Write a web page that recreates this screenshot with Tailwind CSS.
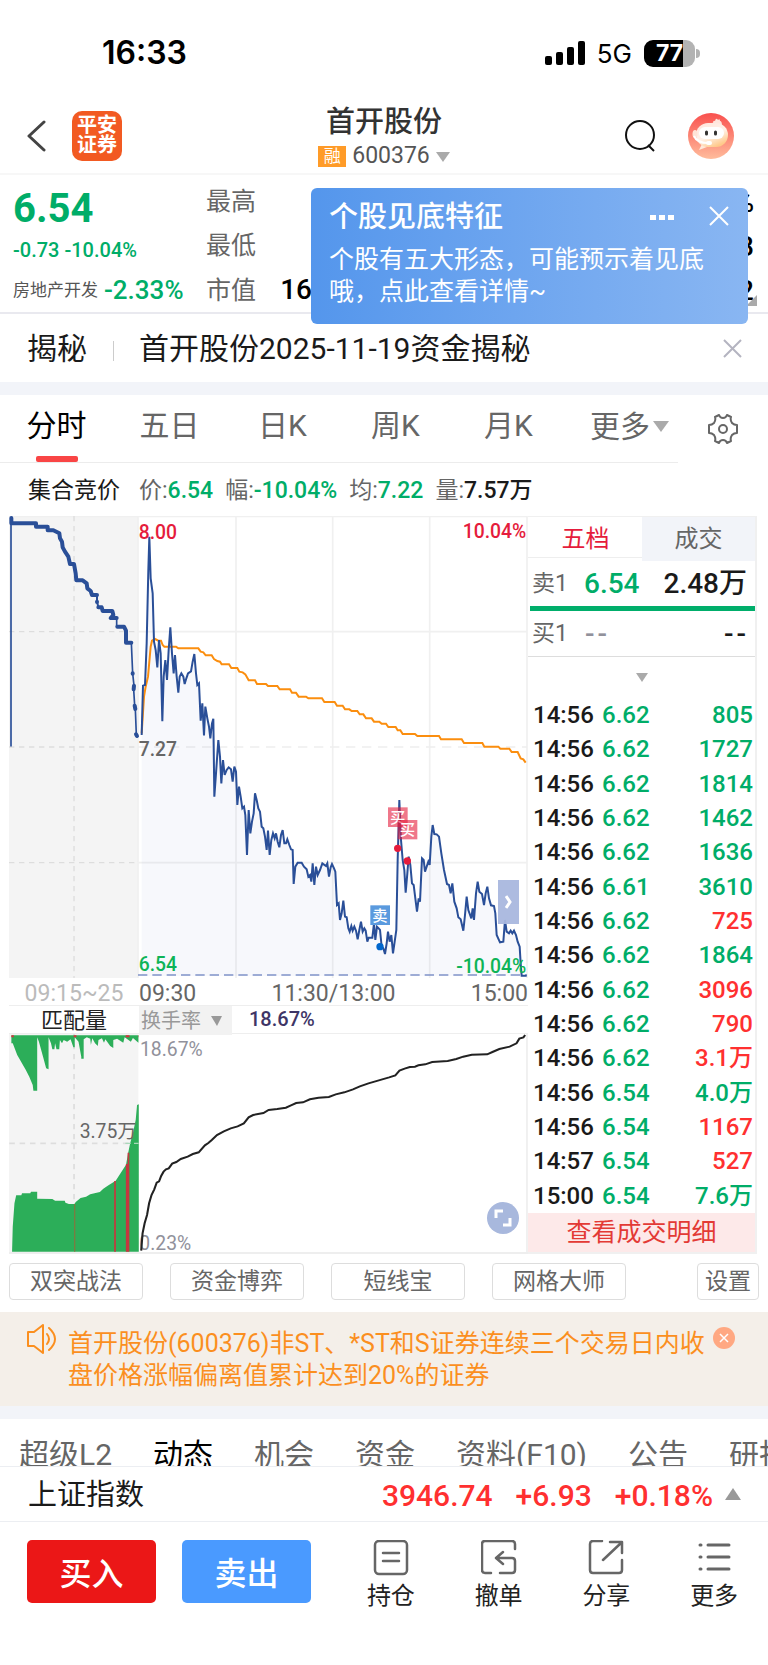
<!DOCTYPE html>
<html lang="zh-CN">
<head>
    <meta charset="UTF-8">
    <meta name="viewport" content="width=device-width, initial-scale=1.0">
    <title>首开股份 600376</title>
    <script src="https://cdn.jsdelivr.net/npm/@tailwindcss/browser@4"></script>
</head>
<body class="bg-white text-[#1a1a1a] font-['Roboto','Noto_Sans_CJK_SC',sans-serif] overflow-x-hidden">
    <!-- Status bar -->
    <div class="flex items-center justify-between h-[78px] pt-[28px] pl-[102px] pr-[68px] text-black font-['Inter',sans-serif]">
        <span class="text-[32px] font-semibold">16:33</span>
        <div class="flex items-center gap-3">
            <svg class="w-[40px] h-[25px]" viewBox="0 0 40 25">
                <rect x="0" y="15" width="7" height="9" rx="2"/>
                <rect x="11" y="11" width="7" height="13" rx="2"/>
                <rect x="22" y="6" width="7" height="18" rx="2"/>
                <rect x="33" y="0" width="7" height="24" rx="2"/>
            </svg>
            <span class="text-[26px]">5G</span>
            <div class="flex items-center gap-px">
                <div class="flex items-center justify-center w-[51px] h-[27px] rounded-[9px] bg-linear-to-r from-black from-76% to-[#b3b3b3] to-76% text-white text-[23px] font-bold">77</div>
                <div class="w-[4px] h-[9px] rounded-r-full bg-[#b3b3b3]"></div>
            </div>
        </div>
    </div>

    <!-- Header -->
    <header class="grid grid-cols-[1fr_auto_1fr] items-center h-[97px] pt-[20px] px-[27px] border-b-2 border-[#f7f7f7]">
        <div class="flex items-center gap-[26px]">
            <button aria-label="返回">
                <svg class="w-[19px] h-[32px]" viewBox="0 0 19 32" fill="none" stroke="#444" stroke-width="3" stroke-linecap="round" stroke-linejoin="round"><path d="M17 2 2 16l15 14"/></svg>
            </button>
            <div class="w-[50px] h-[50px] pt-[4px] rounded-[10px] bg-[#f25a22] text-white text-[20px] leading-[20px] font-bold text-center">平安<br>证券</div>
        </div>
        <div class="flex flex-col items-center pt-[4px]">
            <h1 class="text-[29px] leading-[38px] font-medium text-[#333]">首开股份</h1>
            <button class="flex items-center gap-[6px] h-[32px]">
                <span class="w-[28px] h-[21px] bg-[#ff9b28] text-white text-[17px] leading-[20px] text-center">融</span>
                <span class="text-[23px] text-[#555]">600376</span>
                <svg class="w-[14px] h-[10px]" viewBox="0 0 14 10"><path d="M0 0h14L7 10z" fill="#aaa"/></svg>
            </button>
        </div>
        <div class="flex items-center justify-end gap-[32px] mr-[7px]">
            <button aria-label="搜索">
                <svg class="w-[31px] h-[33px]" viewBox="0 0 31 33" fill="none" stroke="#111" stroke-width="2"><circle cx="15" cy="16" r="14"/><path d="M23 26l6 6"/></svg>
            </button>
            <button aria-label="客服">
                <svg class="w-[46px] h-[46px]" viewBox="0 0 46 46">
                    <defs>
                        <linearGradient id="avatar" x2="0" y2="1"><stop offset="0" stop-color="#f9504e"/><stop offset="1" stop-color="#ffbc9c"/></linearGradient>
                        <linearGradient id="face" x2=".6" y2="1"><stop offset="0" stop-color="#ffe4dc"/><stop offset=".6" stop-color="#fff2e8"/><stop offset="1" stop-color="#ffc98a"/></linearGradient>
                    </defs>
                    <circle cx="23" cy="23" r="23" fill="url(#avatar)"/>
                    <path d="M23 12q0-3 2-2 0-3 2-2 1-4 3-1 2-2 2 1 2 0 2 5z" fill="#ffe6dd"/>
                    <path d="M14 31 11 37l8-3z" fill="#ffe9da"/>
                    <rect x="8" y="10" width="32" height="24" rx="12" fill="url(#face)"/>
                    <rect x="11" y="14" width="25" height="12" rx="6" fill="#fff"/>
                    <ellipse cx="7" cy="21" rx="2.500" ry="4" fill="#ffe3d6"/>
                    <path d="M6 23q3 7 14 7" fill="none" stroke="#fff" stroke-width="2"/>
                    <rect x="18" y="28" width="6" height="4" rx="2" fill="#fff"/>
                    <path d="M18.500 19v2M27.500 19v2" stroke="#333" stroke-width="3" stroke-linecap="round"/>
                </svg>
            </button>
        </div>
    </header>

    <!-- Quote -->
    <section class="relative grid grid-cols-[193px_1fr_auto] h-[139px] pl-[13px] pr-[14px] border-b-2 border-[#e9e9ef]">
        <div class="pt-[10px]">
            <p class="text-[40px] leading-[48px] font-bold text-[#00ad68]">6.54</p>
            <p class="mt-[5px] text-[20px] leading-[24px] font-medium text-[#00ad68]">-0.73 -10.04%</p>
            <p class="flex items-center gap-[6px] mt-[12px] whitespace-nowrap text-[17px] leading-[32px] text-[#555]">房地产开发 <span class="text-[26px] font-medium text-[#00ad68]">-2.33%</span></p>
        </div>
        <div class="pt-[5px] text-[25px] leading-[44px] text-[#666]">
            <p>最高</p>
            <p>最低</p>
            <p>市值 <span class="ml-[18px] text-[28px] font-medium text-black">16</span></p>
        </div>
        <div class="pt-[6px] text-right text-[28px] leading-[44px] font-medium text-black">
            <p>%</p>
            <p>.28</p>
            <p>.22</p>
        </div>
        <svg class="absolute right-[11px] bottom-[6px] w-[11px] h-[11px]" viewBox="0 0 11 11"><path d="M11 0v11H0z" fill="#aaa"/></svg>

        <!-- Hint popup -->
        <div class="absolute z-10 left-[311px] right-[20px] top-[13px] h-[136px] px-[18px] pt-[10px] rounded-[6px] bg-linear-to-r from-[#5496ec] to-[#89b6f2] text-white">
            <div class="flex items-center">
                <h2 class="flex-1 text-[29px] leading-[38px] font-medium">个股见底特征</h2>
                <button aria-label="更多选项" class="flex gap-[3px] mr-[35px]">
                    <i class="w-[6px] h-[5px] bg-white"></i><i class="w-[6px] h-[5px] bg-white"></i><i class="w-[6px] h-[5px] bg-white"></i>
                </button>
                <button aria-label="关闭提示" class="pb-[3px] pr-px">
                    <svg class="w-[20px] h-[20px]" viewBox="0 0 20 20" stroke="#fff" stroke-width="2"><path d="M1 1l18 18M19 1 1 19"/></svg>
                </button>
            </div>
            <p class="mt-[8px] text-[25px] leading-[32px]">个股有五大形态，可能预示着见底哦，点此查看详情~</p>
        </div>
    </section>

    <!-- News -->
    <section class="flex items-center h-[68px] pt-px pl-[27px] pr-[26px] text-[30px]">
        <span>揭秘</span>
        <i class="w-px h-[20px] mt-[4px] ml-[26px] mr-[25px] bg-[#ccc]"></i>
        <a href="#" class="flex-1">首开股份2025-11-19资金揭秘</a>
        <button aria-label="关闭">
            <svg class="w-[19px] h-[19px]" viewBox="0 0 19 19" stroke="#b4b4c0" stroke-width="2"><path d="M1 1l17 17M18 1 1 18"/></svg>
        </button>
    </section>
    <div class="h-[13px] bg-[#f2f4f9]"></div>

    <!-- Period tabs -->
    <nav class="grid grid-cols-[678fr_90fr] h-[67px] text-[30px] leading-[60px] text-[#666]">
        <div class="grid grid-cols-6 border-b border-[#ececec]">
            <button class="flex flex-col items-center pt-px text-black">
                <span>分时</span>
                <i class="w-[42px] h-[6px] rounded-[2px] bg-[#f94545]"></i>
            </button>
            <button class="flex justify-center pt-px">五日</button>
            <button class="flex justify-center pt-px">日K</button>
            <button class="flex justify-center pt-px">周K</button>
            <button class="flex justify-center pt-px">月K</button>
            <button class="flex justify-center items-center gap-[3px] h-[62px] pt-px pl-[16px]">更多
                <svg class="w-[16px] h-[11px]" viewBox="0 0 16 11"><path d="M0 0h16L8 11z" fill="#aaa"/></svg>
            </button>
        </div>
        <button aria-label="图表设置" class="flex justify-center items-center">
            <svg class="w-[30px] h-[30px]" viewBox="0 0 30 30" fill="none" stroke="#666" stroke-width="2" stroke-linejoin="round">
                <path d="M11 1q1 3 4 3t4-3l4 2q-1 3 1 6 2 2 5 2v8q-3 0-5 2-2 3-1 6l-4 2q-1-3-4-3t-4 3l-4-2q1-3-1-6-2-2-5-2v-8q3 0 5-2 2-3 1-6z"/>
                <circle cx="15" cy="15" r="4"/>
            </svg>
        </button>
    </nav>

    <!-- Auction summary -->
    <div class="flex items-center h-[54px] pt-[4px] pl-[28px] text-[23px] text-[#666]">
        <span class="mr-[19px] text-[#1a1a1a]">集合竞价</span>
        <span class="mr-[12px]">价:<b class="font-medium text-[#00ad68]">6.54</b></span>
        <span class="mr-[12px]">幅:<b class="font-medium text-[#00ad68]">-10.04%</b></span>
        <span class="mr-[12px]">均:<b class="font-medium text-[#00ad68]">7.22</b></span>
        <span>量:<b class="font-medium text-[#1a1a1a]">7.57万</b></span>
    </div>

    <!-- Charts and order book -->
    <main class="grid grid-cols-[519fr_229fr] pl-[9px] pr-[11px]">
        <div class="relative border-b-2 border-[#eee]">
            <svg class="w-full block" viewBox="-363 18 1557 1386" font-family="Roboto" font-size="58" font-weight="500">
                <rect x="-363" y="18" width="388" height="1386" fill="#f4f4f4"/>
                <path d="M24 18V1404M318 18V1404M608 18V1404M899 18V1404M1191 18V1404M-363 19H1191M24 365H1191M24 1058H1191" stroke="#f0f0f0" stroke-width="5"/>
                <path d="M-168 18V1404M-363 365H24M-363 711H24M-363 1058H24" stroke="#ddd" stroke-width="4" stroke-dasharray="16 14"/>
                <path d="M24 711H1191" stroke="#eee" stroke-width="5" stroke-dasharray="28 20"/>
                <path d="M35 1398V675L39 527 45 525 50 400 55 180 58 80 62 205 68 250 72 395 77 420 82 472 87 390 92 430 97 634 101 500 106 450 111 510 116 420 121 352 126 430 131 490 135 435 140 500 145 548 149 500 154 490 160 500 164 522 169 505 174 490 183 484 188 455 193 432 198 490 202 525 207 520 212 632 217 580 222 676 226 590 232 625 237 650 241 685 246 640 250 626 253 860 258 790 265 690 270 740 274 820 279 750 284 795 290 780 296 772 303 778 308 815 313 770 318 785 322 885 327 830 332 860 337 895 342 890 346 915 351 1035 356 900 361 970 366 935 371 910 375 850 380 870 385 895 390 905 395 950 400 955 405 980 410 1020 414 962 419 1035 424 990 429 970 434 985 438 970 443 995 448 1012 453 975 458 960 463 1000 468 1000 472 988 478 1005 483 1018 488 1020 491 1122 496 1070 503 1058 515 1058 522 1070 530 1078 535 1100 540 1095 544 1115 548 1060 553 1125 558 1070 563 1095 570 1080 577 1060 588 1068 592 1060 597 1100 602 1072 606 1062 612 1075 616 1085 621 1185 626 1180 630 1230 635 1210 640 1172 645 1220 650 1222 655 1255 659 1265 664 1248 668 1262 673 1250 678 1262 683 1288 688 1260 693 1235 698 1265 703 1255 707 1262 712 1295 716 1283 727 1283 732 1240 736 1290 741 1250 746 1255 750 1260 755 1310 760 1315 765 1332 770 1300 774 1265 779 1295 784 1275 789 1330 794 1295 799 1260 803 1050 808 870 813 990 818 1050 823 1080 827 1148 832 1090 836 1040 841 1065 846 1120 851 1125 856 1165 861 1205 866 1165 870 1175 876 1045 881 1050 885 1085 890 1070 895 1055 899 1065 904 980 908 945 913 972 920 973 927 980 934 1030 942 1080 951 1122 957 1125 962 1150 967 1120 973 1175 980 1195 985 1222 992 1228 1000 1262 1005 1215 1010 1160 1015 1200 1024 1225 1028 1195 1032 1230 1038 1150 1043 1115 1048 1145 1056 1152 1062 1185 1067 1150 1072 1130 1077 1165 1083 1186 1092 1188 1096 1210 1100 1275 1110 1297 1120 1295 1125 1230 1130 1265 1137 1270 1142 1262 1147 1270 1152 1262 1158 1275 1163 1295 1169 1310 1172 1360 1175 1397H1190" fill="#2c56a8" fill-opacity=".04"/>
                <path d="M24 1395H1191" stroke="#8093c8" stroke-width="5" stroke-dasharray="28 15"/>
                <path d="M35 670 42 560 47 530 54 500 62 410 66 392 75 387 85 392H93L98 405 103 410H138L145 415H205L212 425 220 427 227 436H245L252 447 262 453 270 455 275 463H297L304 474H322L328 485 338 487 346 493 356 511H375L381 522H408L414 528H442L449 538H480L486 548H498L506 560H528L535 565H576L583 576H614L621 587H638L645 598H658L665 603H682L689 613H700L708 625H725L732 635H748L755 641H768L775 651H797L803 661H811L818 672H855L862 678H927L933 688H995L1002 699H1057L1063 710H1105L1111 716H1138L1145 726H1163L1172 745 1180 748 1187 758" fill="none" stroke="#fb8e0f" stroke-width="6"/>
                <path d="M35 675 39 527 45 525 50 400 55 180 58 80 62 205 68 250 72 395 77 420 82 472 87 390 92 430 97 634 101 500 106 450 111 510 116 420 121 352 126 430 131 490 135 435 140 500 145 548 149 500 154 490 160 500 164 522 169 505 174 490 183 484 188 455 193 432 198 490 202 525 207 520 212 632 217 580 222 676 226 590 232 625 237 650 241 685 246 640 250 626 253 860 258 790 265 690 270 740 274 820 279 750 284 795 290 780 296 772 303 778 308 815 313 770 318 785 322 885 327 830 332 860 337 895 342 890 346 915 351 1035 356 900 361 970 366 935 371 910 375 850 380 870 385 895 390 905 395 950 400 955 405 980 410 1020 414 962 419 1035 424 990 429 970 434 985 438 970 443 995 448 1012 453 975 458 960 463 1000 468 1000 472 988 478 1005 483 1018 488 1020 491 1122 496 1070 503 1058 515 1058 522 1070 530 1078 535 1100 540 1095 544 1115 548 1060 553 1125 558 1070 563 1095 570 1080 577 1060 588 1068 592 1060 597 1100 602 1072 606 1062 612 1075 616 1085 621 1185 626 1180 630 1230 635 1210 640 1172 645 1220 650 1222 655 1255 659 1265 664 1248 668 1262 673 1250 678 1262 683 1288 688 1260 693 1235 698 1265 703 1255 707 1262 712 1295 716 1283 727 1283 732 1240 736 1290 741 1250 746 1255 750 1260 755 1310 760 1315 765 1332 770 1300 774 1265 779 1295 784 1275 789 1330 794 1295 799 1260 803 1050 808 870 813 990 818 1050 823 1080 827 1148 832 1090 836 1040 841 1065 846 1120 851 1125 856 1165 861 1205 866 1165 870 1175 876 1045 881 1050 885 1085 890 1070 895 1055 899 1065 904 980 908 945 913 972 920 973 927 980 934 1030 942 1080 951 1122 957 1125 962 1150 967 1120 973 1175 980 1195 985 1222 992 1228 1000 1262 1005 1215 1010 1160 1015 1200 1024 1225 1028 1195 1032 1230 1038 1150 1043 1115 1048 1145 1056 1152 1062 1185 1067 1150 1072 1130 1077 1165 1083 1186 1092 1188 1096 1210 1100 1275 1110 1297 1120 1295 1125 1230 1130 1265 1137 1270 1142 1262 1147 1270 1152 1262 1158 1275 1163 1295 1169 1310 1172 1360 1175 1397H1190" fill="none" stroke="#2a4f98" stroke-width="6"/>
                <!-- Call auction -->
                <g transform="translate(-390 0)" fill="none" stroke="#2a4f98" stroke-linecap="round">
                    <path d="M33 40V708" stroke-width="5"/>
                    <path d="M34 24V40H108V50H143V61H160L178 70 180 85 186 95 188 112 195 125 205 140 210 162H222L227 190 229 211H248L260 220 262 235 272 243 276 255H291" stroke-width="12" stroke-linejoin="round"/>
                    <path d="M291 255V275L295 291" stroke-width="6"/>
                    <path d="M295 292H305L308 303H337L340 315 332 324H350M352 350H372L378 362V398H394M291 275V276M398 490V491M402 527 401 538M404 587 406 597M408 673 411 678" stroke-width="12" stroke-linejoin="round"/>
                    <path d="M350 324V350M394 398 398 490 402 527 401 538 404 587 406 597 409 675" stroke-width="5"/>
                </g>
                <g fill="#e51c3c">
                    <text x="26" y="88">8.00</text>
                    <text x="1189" y="83" text-anchor="end">10.04%</text>
                    <circle cx="803" cy="1015" r="11"/>
                    <circle cx="832" cy="1053" r="11"/>
                </g>
                <text x="26" y="737" fill="#666">7.27</text>
                <g fill="#0eb457">
                    <text x="26" y="1382">6.54</text>
                    <text x="1189" y="1389" text-anchor="end">-10.04%</text>
                </g>
                <circle cx="750" cy="1310" r="11" fill="#0066cc"/>
                <g font-family="Noto Sans CJK SC" font-size="46" fill="#fff" text-anchor="middle">
                    <rect x="774" y="892" width="59" height="59" fill="#e51c3c" fill-opacity=".6"/>
                    <text x="803" y="938">买</text>
                    <rect x="803" y="930" width="59" height="58" fill="#e51c3c" fill-opacity=".6"/>
                    <text x="832" y="976">买</text>
                    <rect x="721" y="1186" width="59" height="59" fill="#5a9ade"/>
                    <text x="750" y="1232">卖</text>
                </g>
            </svg>
            <button aria-label="展开盘口" class="absolute right-[9px] top-[364px] flex items-center justify-center w-[21px] h-[44px] bg-[#a9b7de]/95">
                <svg class="w-[7px] h-[14px]" viewBox="0 0 7 14" fill="none" stroke="#fff" stroke-width="3"><path d="M1 1l4 6-4 6"/></svg>
            </button>
            <div class="grid grid-cols-[130fr_389fr] h-[27px] pt-[2px] text-[23px] leading-[28px] text-[#666]">
                <span class="text-center text-[#bbb]">09:15~25</span>
                <div class="flex justify-between"><span>09:30</span><span>11:30/13:00</span><span>15:00</span></div>
            </div>
            <div class="grid grid-cols-[130fr_389fr] h-[29px] border-y border-[#eee]">
                <span class="text-[22px] leading-[29px] text-center text-[#222]">匹配量</span>
                <div class="flex">
                    <label class="flex items-center w-[93px] bg-[#f2f2f2]">
                        <select aria-label="指标" class="appearance-none pl-[2px] text-[20px] leading-[26px] text-[#999]"><option>换手率</option></select>
                        <svg class="w-[11px] h-[10px] ml-[10px]" viewBox="0 0 11 10"><path d="M0 0h11L6 10z" fill="#999"/></svg>
                    </label>
                    <span class="ml-[17px] text-[20px] leading-[26px] font-medium text-[#3e3566]">18.67%</span>
                </div>
            </div>
            <svg class="w-full block" viewBox="27 222 1557 654" font-family="Roboto" font-size="58">
                <rect x="27" y="222" width="388" height="654" fill="#f4f4f4"/>
                <path d="M1581 222V876" stroke="#eee" stroke-width="5"/>
                <g transform="scale(1.0331 1)">
                    <path d="M215 222V876M27 550H403" stroke="#ddd" stroke-width="5" stroke-dasharray="16 14"/>
                    <path d="M33 226V250H37L50 285 75 330 85 350 95 375 97 392H108V232L113 245 125 290 134 325 141 328V232L148 250 152 268H158L160 250 164 268H172L174 240 180 250 185 240 195 245 205 238 213 262H217V232L228 245 236 290V296H243V238L252 232 262 236 264 255 268 235 276 250 284 258 286 240 296 235 302 248 306 238 320 258 329 264V240L340 236 358 248 362 232 380 245 386 234 402 248V226z" fill="#2cae59"/>
                    <path d="M35 875 37 800 42 730 47 706H62L64 700H88L90 695H108V716L152 717 160 722H188L190 728 200 732H216L220 726 234 714 250 710 262 703 290 696 300 686 315 676 336 662 350 640 366 614 372 580 378 550 386 520 394 480 398 435 403 433V875z" fill="#2cae59"/>
                    <path d="M33 229H40M214 229H222M365 229H376M402 229H403" stroke="#d9303e" stroke-width="6"/>
                    <path d="M334 663V875M368 612V875M373 578V875" stroke="#c5383f" stroke-width="5"/>
                    <path d="M217 732V875" stroke="#8f6f3c" stroke-width="3"/>
                </g>
                <path d="M376 550H416" stroke="#a9d8b9" stroke-width="4" stroke-dasharray="16 10"/>
                <text x="239" y="535" fill="#666" font-family="Roboto, Noto Sans CJK SC">3.75万</text>
                <text x="420" y="289" fill="#91919b">18.67%</text>
                <text x="418" y="870" fill="#91919b">0.23%</text>
                <path transform="scale(1.0331 1)" d="M410 872 414 820 420 790 427 765 433 730 440 705 448 688 455 668 462 664 468 648 475 635 482 628 490 625 500 611 512 606 525 597 545 590 560 582 577 577 595 556 605 549 615 540 630 525 650 514 670 505 690 499 708 490 722 472 735 465 765 459 780 450 805 447 830 443 845 436 860 429 880 427 900 418 925 413 955 411 975 403 1000 397 1025 388 1045 379 1070 370 1100 361 1130 352 1148 346 1160 332 1175 326 1190 321 1205 320 1215 316 1235 313 1255 306 1300 303 1325 297 1345 290 1370 284 1415 283 1430 276 1450 267 1480 260 1500 250 1508 236 1520 232 1525 225" fill="none" stroke="#222" stroke-width="6"/>
            </svg>
            <button aria-label="全屏" class="absolute right-[9px] bottom-[18px] flex items-center justify-center w-[32px] h-[32px] rounded-full bg-[#a8b8dd]">
                <svg class="w-[18px] h-[18px]" viewBox="0 0 18 18" fill="none" stroke="#fff" stroke-width="3"><path d="M2 9V2h7M16 9v7H9"/></svg>
            </button>
        </div>

        <div class="flex flex-col border-t border-r-2 border-b-2 border-[#f0f0f0]">
            <div class="grid grid-cols-2 h-[41px] pl-px text-[24px] leading-[44px] text-[#666] border-b border-[#eee]">
                <button class="text-[#e51c3c]">五档</button>
                <button class="bg-[#f2f4f9]">成交</button>
            </div>
            <div class="flex items-center h-[48px] pt-[4px] pl-[4px] pr-[8px] text-[28px] font-medium">
                <span class="w-[52px] text-[23px] font-normal text-[#666]">卖1</span>
                <span class="flex-1 text-[#00ad68]">6.54</span>
                <span>2.48万</span>
            </div>
            <div class="h-[5px] ml-[2px] bg-[#00ae6b]"></div>
            <div class="flex items-center h-[46px] pt-px pl-[4px] pr-[9px] text-[28px] font-medium border-b border-[#ddd]">
                <span class="w-[53px] text-[23px] font-normal text-[#666]">买1</span>
                <span class="flex flex-1 gap-[3px] text-[#91919b]"><i class="not-italic">-</i><i class="not-italic">-</i></span>
                <span class="flex gap-[3px]"><i class="not-italic">-</i><i class="not-italic">-</i></span>
            </div>
            <button aria-label="展开五档" class="flex items-center justify-center h-[41px]">
                <svg class="w-[12px] h-[9px]" viewBox="0 0 12 9"><path d="M0 0h12L6 9z" fill="#aaa"/></svg>
            </button>
            <table class="w-full flex-1 text-[24px] leading-[34px] font-medium text-[#00ad68] [&_td:first-child]:w-[74px] [&_td:first-child]:pl-[5px] [&_td:first-child]:text-[#1a1a1a] [&_td:last-child]:pr-[2px] [&_td:last-child]:text-right [&_td]:p-0 [&_td]:h-[34px]">
                <tbody>
                    <tr><td>14:56</td><td>6.62</td><td>805</td></tr>
                    <tr><td>14:56</td><td>6.62</td><td>1727</td></tr>
                    <tr><td>14:56</td><td>6.62</td><td>1814</td></tr>
                    <tr><td>14:56</td><td>6.62</td><td>1462</td></tr>
                    <tr><td>14:56</td><td>6.62</td><td>1636</td></tr>
                    <tr><td>14:56</td><td>6.61</td><td>3610</td></tr>
                    <tr><td>14:56</td><td>6.62</td><td class="text-[#ff3030]">725</td></tr>
                    <tr><td>14:56</td><td>6.62</td><td>1864</td></tr>
                    <tr><td>14:56</td><td>6.62</td><td class="text-[#ff3030]">3096</td></tr>
                    <tr><td>14:56</td><td>6.62</td><td class="text-[#ff3030]">790</td></tr>
                    <tr><td>14:56</td><td>6.62</td><td class="text-[#ff3030]">3.1万</td></tr>
                    <tr><td>14:56</td><td>6.54</td><td>4.0万</td></tr>
                    <tr><td>14:56</td><td>6.54</td><td class="text-[#ff3030]">1167</td></tr>
                    <tr><td>14:57</td><td>6.54</td><td class="text-[#ff3030]">527</td></tr>
                    <tr><td>15:00</td><td>6.54</td><td>7.6万</td></tr>
                </tbody>
            </table>
            <a href="#" class="h-[39px] text-[25px] leading-[40px] text-center text-[#e33a35] bg-[#fde9e9]">查看成交明细</a>
        </div>
    </main>

    <!-- Tools -->
    <div class="flex gap-[27px] pt-[9px] pb-[12px] pl-[9px] pr-[9px] text-[23px] leading-[36px] text-[#666]">
        <button class="w-[134px] h-[37px] border border-[#ddd] rounded-[4px]">双突战法</button>
        <button class="w-[134px] h-[37px] border border-[#ddd] rounded-[4px]">资金博弈</button>
        <button class="w-[134px] h-[37px] border border-[#ddd] rounded-[4px]">短线宝</button>
        <button class="w-[134px] h-[37px] border border-[#ddd] rounded-[4px]">网格大师</button>
        <button class="w-[62px] h-[37px] ml-auto border border-[#ddd] rounded-[4px]">设置</button>
    </div>

    <!-- Notice -->
    <section class="flex items-start h-[94px] pt-[12px] pl-[27px] pr-[33px] bg-[#f4efe9] text-[#fb8f1f]">
        <svg class="w-[30px] h-[30px]" viewBox="0 0 30 30" fill="none" stroke="#fb8f1f" stroke-width="2" stroke-linejoin="round" stroke-linecap="round"><path d="M1 8h6l9-7v28l-9-7H1zM20 10q4 5 0 10M22 4q12 11 0 22"/></svg>
        <p class="flex-1 pt-[4px] ml-[11px] mr-[4px] text-[25px] leading-[32px]">首开股份(600376)非ST、*ST和S证券连续三个交易日内收盘价格涨幅偏离值累计达到20%的证券</p>
        <button aria-label="关闭公告" class="mt-[3px]">
            <svg class="w-[22px] h-[22px]" viewBox="0 0 22 22"><circle cx="11" cy="11" r="11" fill="#ffa882"/><path d="M7 7l8 8M15 7l-8 8" stroke="#fff" stroke-width="1.500"/></svg>
        </button>
    </section>
    <div class="h-[13px] bg-[#f2f4f9]"></div>

    <!-- Content tabs -->
    <nav class="flex gap-[41px] h-[47px] pl-[19px] pt-[16px] overflow-hidden whitespace-nowrap text-[30px] leading-[40px] text-[#666]">
        <a href="#">超级L2</a>
        <a href="#" class="text-black">动态</a>
        <a href="#">机会</a>
        <a href="#">资金</a>
        <a href="#">资料(F10)</a>
        <a href="#">公告</a>
        <a href="#">研报</a>
    </nav>

    <!-- Index -->
    <section class="flex items-center h-[56px] pt-[3px] pl-[28px] pr-[27px] border-y border-[#eceef2] text-[30px] font-medium text-[#ff3030]">
        <span class="flex-1 text-[29px] font-normal text-[#1a1a1a]">上证指数</span>
        <span class="mr-[23px]">3946.74</span>
        <span class="mr-[23px]">+6.93</span>
        <span class="mr-[12px]">+0.18%</span>
        <svg class="w-[16px] h-[12px] mb-[4px]" viewBox="0 0 16 12"><path d="M8 0l8 12H0z" fill="#999"/></svg>
    </section>

    <!-- Bottom bar -->
    <footer class="flex pt-[18px] pl-[27px] h-[143px] text-[24px] leading-[32px] text-[#222]">
        <button class="w-[129px] h-[63px] mr-[26px] rounded-[5px] bg-[#eb1717] text-white text-[32px] leading-[68px] font-medium">买入</button>
        <button class="w-[129px] h-[63px] mr-[26px] rounded-[5px] bg-[#4a9aff] text-white text-[32px] leading-[68px] font-medium">卖出</button>
        <div class="grid grid-cols-4 flex-1">
            <button class="flex flex-col items-center justify-start gap-[4px] h-[72px]">
                <svg class="w-[36px] h-[36px]" viewBox="0 0 36 36" fill="none" stroke="#666" stroke-width="2.500" stroke-linecap="round"><rect x="2" y="1" width="32" height="33" rx="4"/><path d="M10 13h16M10 21h16"/></svg>
                持仓
            </button>
            <button class="flex flex-col items-center justify-start gap-[4px] h-[72px]">
                <svg class="w-[36px] h-[36px]" viewBox="0 0 36 36" fill="none" stroke="#666" stroke-width="2.500" stroke-linecap="round" stroke-linejoin="round"><path d="M34 9V4q0-3-3-3H4Q1 1 1 4v26q0 3 3 3h6M22 12l-7 6 7 6M16 18h15q3 0 3 3v9q0 3-3 3H19"/></svg>
                撤单
            </button>
            <button class="flex flex-col items-center justify-start gap-[4px] h-[72px]">
                <svg class="w-[36px] h-[36px]" viewBox="0 0 36 36" fill="none" stroke="#666" stroke-width="2.500" stroke-linecap="round" stroke-linejoin="round"><path d="M14 1H5Q2 1 2 4v26q0 3 3 3h26q3 0 3-3V20M22 2h12v11M33 3 15 20"/></svg>
                分享
            </button>
            <button class="flex flex-col items-center justify-start gap-[4px] h-[72px]">
                <svg class="w-[36px] h-[36px]" viewBox="0 0 36 36" fill="none" stroke="#666" stroke-width="3" stroke-linecap="round"><path d="M4 5h1M12 5h21M4 17h1M12 17h21M4 29h1M12 29h21"/></svg>
                更多
            </button>
        </div>
    </footer>
</body>
</html>
